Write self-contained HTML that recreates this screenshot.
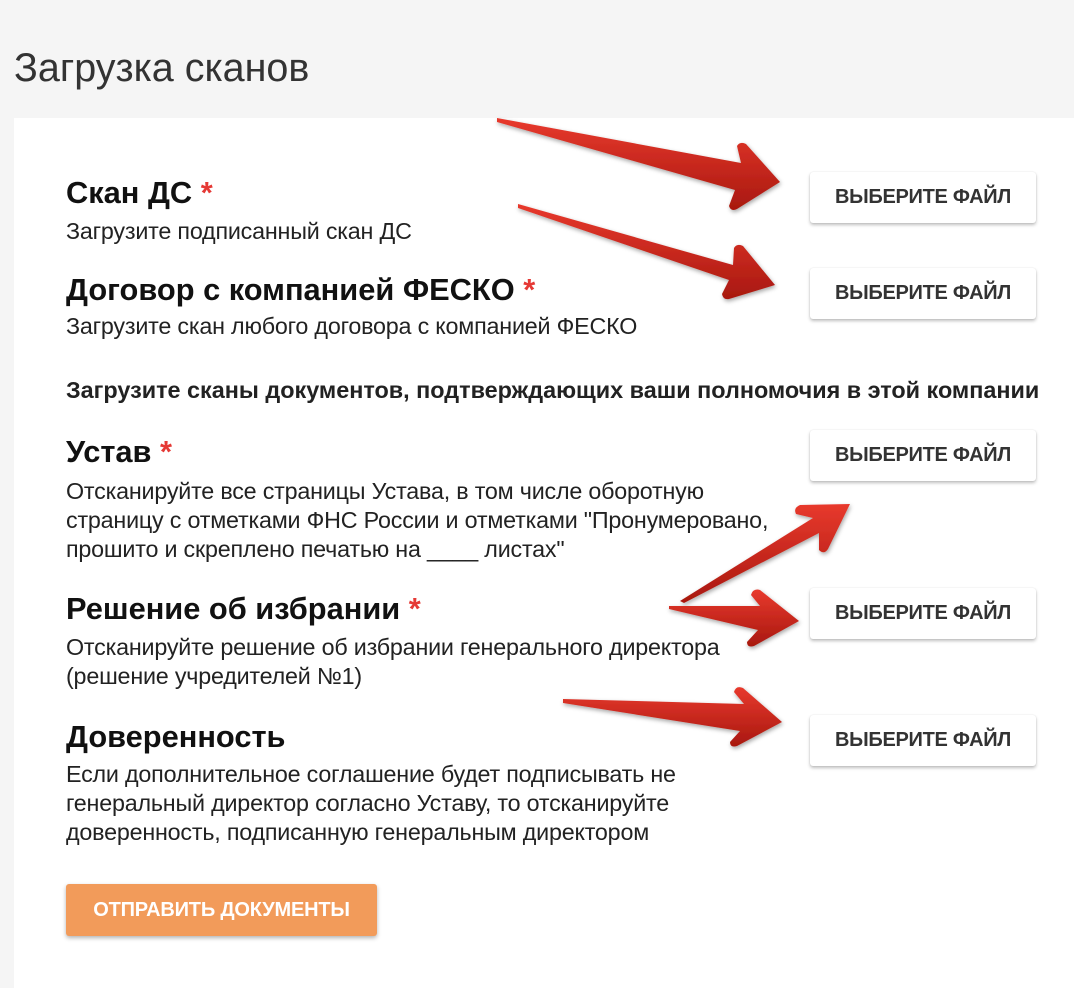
<!DOCTYPE html>
<html><head><meta charset="utf-8"><style>
*{margin:0;padding:0;box-sizing:border-box}
body{width:1074px;height:974px;background:#f5f5f5;font-family:"Liberation Sans",sans-serif;color:#222;position:relative;overflow:hidden}
.card{position:absolute;left:14px;top:118px;width:1070px;height:870px;background:#fff}
.a{position:absolute;white-space:nowrap}
h1{position:absolute;left:14px;top:45px;font-size:39.5px;line-height:46px;font-weight:400;color:#333}
.h{font-size:30.8px;line-height:34px;font-weight:bold;color:#111;left:66px}
.h span{color:#e53935}
.t{font-size:23.3px;color:#222;left:66px;line-height:29px;letter-spacing:-0.2px}
.btn{position:absolute;left:810px;width:226px;height:51px;background:#fff;border-radius:3px;box-shadow:0 2px 3px rgba(0,0,0,.25),0 0 1px rgba(0,0,0,.15);font-size:20px;font-weight:bold;color:#333;text-align:center;line-height:51px;letter-spacing:-0.3px}
.sub{position:absolute;left:66px;top:884px;width:311px;height:52px;background:#f29b5a;border-radius:3px;box-shadow:0 2px 4px rgba(0,0,0,.3);color:#fff;font-size:20px;font-weight:bold;text-align:center;line-height:52px;letter-spacing:-0.2px}
svg{position:absolute;left:0;top:0}
</style></head><body>
<h1>Загрузка сканов</h1>
<div class="card"></div>
<div class="a h" style="top:176px">Скан ДС <span>*</span></div>
<div class="a t" style="top:217px">Загрузите подписанный скан ДС</div>
<div class="a h" style="top:273px">Договор с компанией ФЕСКО <span>*</span></div>
<div class="a t" style="top:312px">Загрузите скан любого договора с компанией ФЕСКО</div>
<div class="a t" style="top:376px;font-weight:bold;font-size:23.4px;letter-spacing:0">Загрузите сканы документов, подтверждающих ваши полномочия в этой компании</div>
<div class="a h" style="top:435px">Устав <span>*</span></div>
<div class="a t" style="top:477px">Отсканируйте все страницы Устава, в том числе оборотную<br>страницу с отметками ФНС России и отметками "Пронумеровано,<br>прошито и скреплено печатью на ____ листах"</div>
<div class="a h" style="top:592px">Решение об избрании <span>*</span></div>
<div class="a t" style="top:633px">Отсканируйте решение об избрании генерального директора<br>(решение учредителей №1)</div>
<div class="a h" style="top:720px">Доверенность</div>
<div class="a t" style="top:760px">Если дополнительное соглашение будет подписывать не<br>генеральный директор согласно Уставу, то отсканируйте<br>доверенность, подписанную генеральным директором</div>
<div class="btn" style="top:172px">ВЫБЕРИТЕ ФАЙЛ</div>
<div class="btn" style="top:268px">ВЫБЕРИТЕ ФАЙЛ</div>
<div class="btn" style="top:430px">ВЫБЕРИТЕ ФАЙЛ</div>
<div class="btn" style="top:588px">ВЫБЕРИТЕ ФАЙЛ</div>
<div class="btn" style="top:715px">ВЫБЕРИТЕ ФАЙЛ</div>
<div class="sub">ОТПРАВИТЬ ДОКУМЕНТЫ</div>
<svg width="1074" height="974">
<defs>
<linearGradient id="g" x1="0" y1="0" x2="0" y2="1"><stop offset="0" stop-color="#e8392d"/><stop offset="1" stop-color="#a8180f"/></linearGradient>
<filter id="s" x="-20%" y="-50%" width="140%" height="200%"><feDropShadow dx="1" dy="2" stdDeviation="2" flood-opacity=".35"/></filter>
</defs>
<g filter="url(#s)">
<path d="M497,118 L741,163 L737,146 Q740,141 746,144 L780,182 L737,209 Q731,212 729,206 L735,190 L497,122 Z" fill="url(#g)"/>
<path d="M518,204 L733,265 L734,248 Q737,243 743,246 L775,285 L729,299 Q723,300 722,294 L729,280 L518,208 Z" fill="url(#g)"/>
<path d="M680,601 L813,518 L796,514 Q793,508 800,505 L850,504 L828,549 Q824,555 819,550 L819,533 L684,603 Z" fill="url(#g)"/>
<path d="M669,606 L760,606 L751,595 Q753,588 760,590 L799,621 L754,646 Q747,648 747,642 L758,630 L669,609 Z" fill="url(#g)"/>
<path d="M563,699 L744,704 L734,692 Q736,685 743,688 L782,722 L737,746 Q730,748 730,742 L740,731 L563,703 Z" fill="url(#g)"/>
</g>
</svg>
</body></html>
